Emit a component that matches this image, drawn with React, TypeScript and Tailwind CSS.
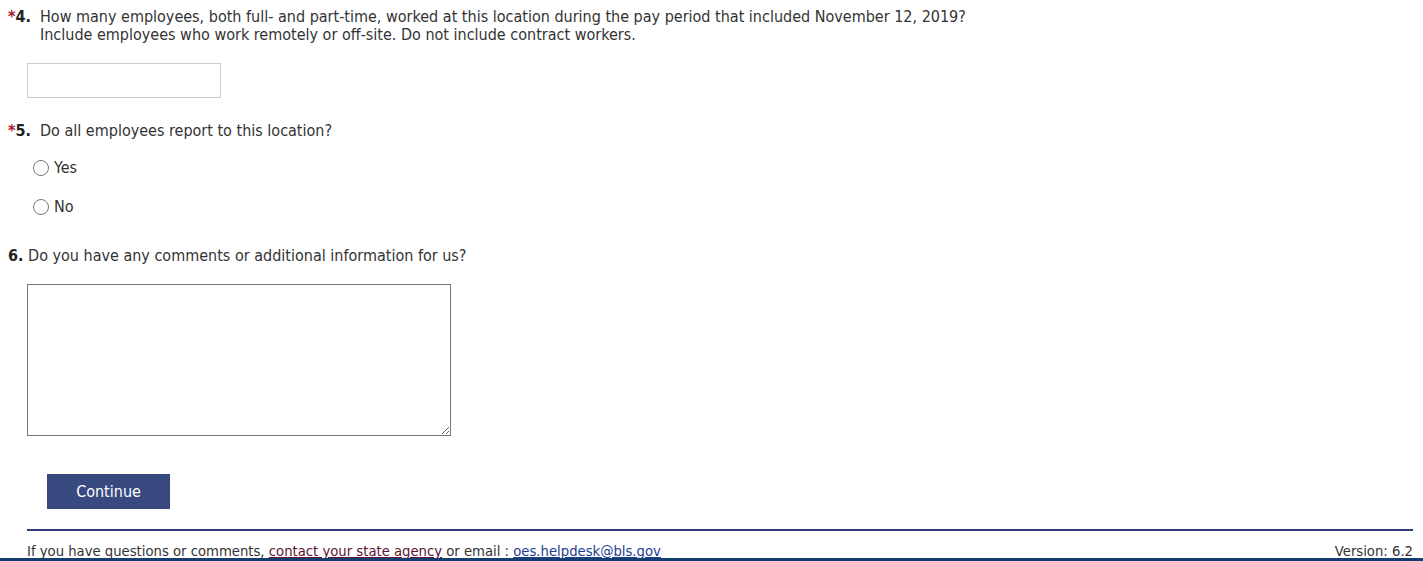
import { useState } from 'react';

const font = { fontFamily: '"DejaVu Sans Condensed", "DejaVu Sans", sans-serif' };

export default function App() {
  const [answer, setAnswer] = useState<string>('');

  return (
    <div className="relative min-h-[561px] bg-white text-[16px] leading-[18px] text-[#333]" style={font}>
      {/* Question 4 */}
      <div className="flex pt-[8px] pl-[8px]">
        <span className="w-[32px] shrink-0 font-bold text-[#222]">
          <span className="text-[#a8162e]">*</span>4.
        </span>
        <div>
          <div>How many employees, both full- and part-time, worked at this location during the pay period that included November 12, 2019?</div>
          <div>Include employees who work remotely or off-site. Do not include contract workers.</div>
        </div>
      </div>
      <div className="mt-[19px] pl-[27px]">
        <input type="text" className="block h-[35px] w-[194px] border border-[#ccc] px-2 outline-none" />
      </div>

      {/* Question 5 */}
      <div className="mt-[24px] flex pl-[8px]">
        <span className="w-[32px] shrink-0 font-bold text-[#222]">
          <span className="text-[#a8162e]">*</span>5.
        </span>
        Do all employees report to this location?
      </div>
      <div className="mt-[19px] flex flex-col gap-[21px] pl-[33px]">
        {['Yes', 'No'].map((opt) => (
          <label key={opt} className="flex items-center gap-[5px]">
            <input
              type="radio"
              name="q5"
              checked={answer === opt}
              onChange={() => setAnswer(opt)}
              className="m-0 h-[16px] w-[16px]"
            />
            {opt}
          </label>
        ))}
      </div>

      {/* Question 6 */}
      <div className="mt-[31px] pl-[8px]">
        <span className="font-bold text-[#222]">6.</span> Do you have any comments or additional information for us?
      </div>
      <div className="mt-[19px] pl-[27px]">
        <textarea className="block h-[152px] w-[424px] border border-[#767676] outline-none" />
      </div>

      <div className="mt-[38px] pl-[47px]">
        <button className="h-[35px] w-[123px] bg-[#38497f] text-[16px] text-white">Continue</button>
      </div>

      {/* Footer */}
      <div className="ml-[27px] mr-[10px] mt-[20px] border-t-2 border-[#2e3f7f] pt-[11px] text-[14.7px]">
        <div className="flex justify-between">
          <div>
            If you have questions or comments,{' '}
            <a href="#" className="text-[#5a1434] underline">contact your state agency</a> or email :{' '}
            <a href="#" className="text-[#1d3d8f] underline">oes.helpdesk@bls.gov</a>
          </div>
          <div>Version: 6.2</div>
        </div>
      </div>

      <div className="fixed bottom-0 left-0 h-[3px] w-full bg-[#153d6f]" />
    </div>
  );
}
